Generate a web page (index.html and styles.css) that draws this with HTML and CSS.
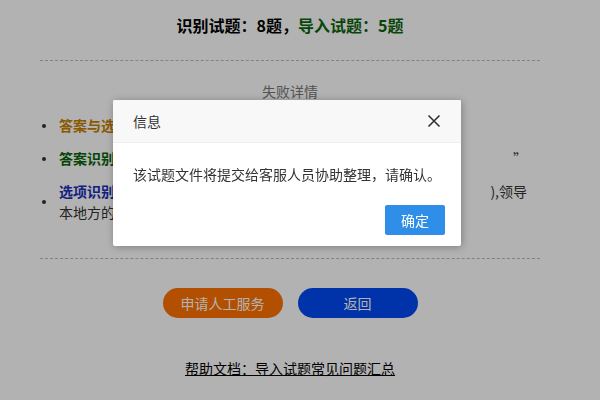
FILE: index.html
```html
<!DOCTYPE html>
<html>
<head>
<meta charset="utf-8">
<link rel="stylesheet" href="styles.css">
</head>
<body>
    <div class="page">
        <h2 class="summary">识别试题：8题，<span class="ok">导入试题：5题</span></h2>
        <div class="fail">
            <div class="fail-title">失败详情</div>
            <ul class="fail-list">
                <li class="row"><span class="tag orange">答案与选项</span></li>
                <li class="row"><span class="tag green">答案识别：</span><span class="tail">”</span></li>
                <li class="row two-line">
                    <div class="lines">
                        <div><span class="tag blue">选项识别：</span><span class="tail">),领导</span></div>
                        <div class="desc">本地方的题目</div>
                    </div>
                </li>
            </ul>
        </div>
        <div class="actions">
            <button class="btn btn-orange">申请人工服务</button>
            <button class="btn btn-blue">返回</button>
        </div>
        <a class="help" href="#">帮助文档：导入试题常见问题汇总</a>
    </div>

    <div class="mask"></div>
    <div class="dialog">
        <div class="dialog-head">
            <span>信息</span>
            <svg class="close" width="14" height="14" viewBox="0 0 14 14">
                <path d="M1.5 1.5 L12.5 12.5 M12.5 1.5 L1.5 12.5" stroke="#333" stroke-width="1.6" fill="none"/>
            </svg>
        </div>
        <div class="dialog-body">该试题文件将提交给客服人员协助整理，请确认。</div>
        <div class="dialog-foot">
            <button class="btn-ok">确定</button>
        </div>
    </div>
</body>
</html>
```

FILE: styles.css
```css
html, body {
    margin: 0;
    padding: 0;
    width: 100%;
    height: 100%;
    background: #fff;
    font-family: "Noto Sans CJK SC", "Liberation Sans", sans-serif;
    font-size: 14px;
    color: #333;
    overflow: hidden;
}
.page {
    width: 500px;
    margin: 0 0 0 40px;
    padding-top: 13px;
    text-align: center;
}
.summary {
    margin: 0;
    font-size: 16px;
    line-height: 24px;
    color: #000;
    font-weight: bold;
}
.summary .ok {
    color: #0c650c;
}
.fail {
    margin-top: 23px;
    border-top: 1px dashed #bbb;
    border-bottom: 1px dashed #bbb;
    padding: 18px 0 35px;
}
.fail-title {
    color: #777;
    line-height: 24px;
}
.fail-list {
    margin: 0;
    padding: 0 13px 0 19px;
    text-align: left;
    list-style: none;
    white-space: nowrap;
}
.row {
    position: relative;
    display: flex;
    line-height: 21px;
    margin-top: 12px;
}
.row:first-child {
    margin-top: 12px;
}
.row::before {
    content: "";
    position: absolute;
    left: -17px;
    top: 9px;
    width: 4px;
    height: 4px;
    border-radius: 50%;
    background: #333;
}
.two-line::before {
    top: 19px;
}
.lines {
    flex: 1;
}
.lines > div:first-child {
    display: flex;
}
.tag {
    font-weight: bold;
}
.tail {
    margin-left: auto;
    color: #333;
}
.orange { color: #c88000; }
.green { color: #0c650c; }
.blue { color: #1a2eb8; }
.desc {
    color: #333;
}
.actions {
    margin-top: 29px;
    display: flex;
    justify-content: center;
    gap: 15px;
}
.btn {
    width: 120px;
    height: 30px;
    border: none;
    border-radius: 15px;
    font-family: inherit;
    font-size: 14px;
    color: #fff;
}
.btn-orange { background: #ff7100; }
.btn-blue { background: #0049f2; }
.help {
    display: inline-block;
    margin-top: 40px;
    color: #000;
    text-decoration: underline;
    line-height: 20px;
}
.mask {
    position: fixed;
    inset: 0;
    background: rgba(0, 0, 0, 0.3);
}
.dialog {
    position: fixed;
    left: 113px;
    top: 100px;
    width: 348px;
    background: #fff;
    border-radius: 2px;
    box-shadow: 1px 1px 8px rgba(0, 0, 0, 0.3);
}
.dialog-head {
    height: 42px;
    display: flex;
    align-items: center;
    justify-content: space-between;
    padding: 0 20px;
    background: #f8f8f8;
    border-bottom: 1px solid #eee;
    border-radius: 2px 2px 0 0;
    color: #333;
}
.dialog-body {
    padding: 21px 20px 0;
    line-height: 20px;
}
.dialog-foot {
    display: flex;
    justify-content: flex-end;
    padding: 21px 16px 11px;
}
.btn-ok {
    width: 60px;
    height: 30px;
    border: none;
    border-radius: 2px;
    background: #2f8fe8;
    color: #fff;
    font-family: inherit;
    font-size: 14px;
}
```
